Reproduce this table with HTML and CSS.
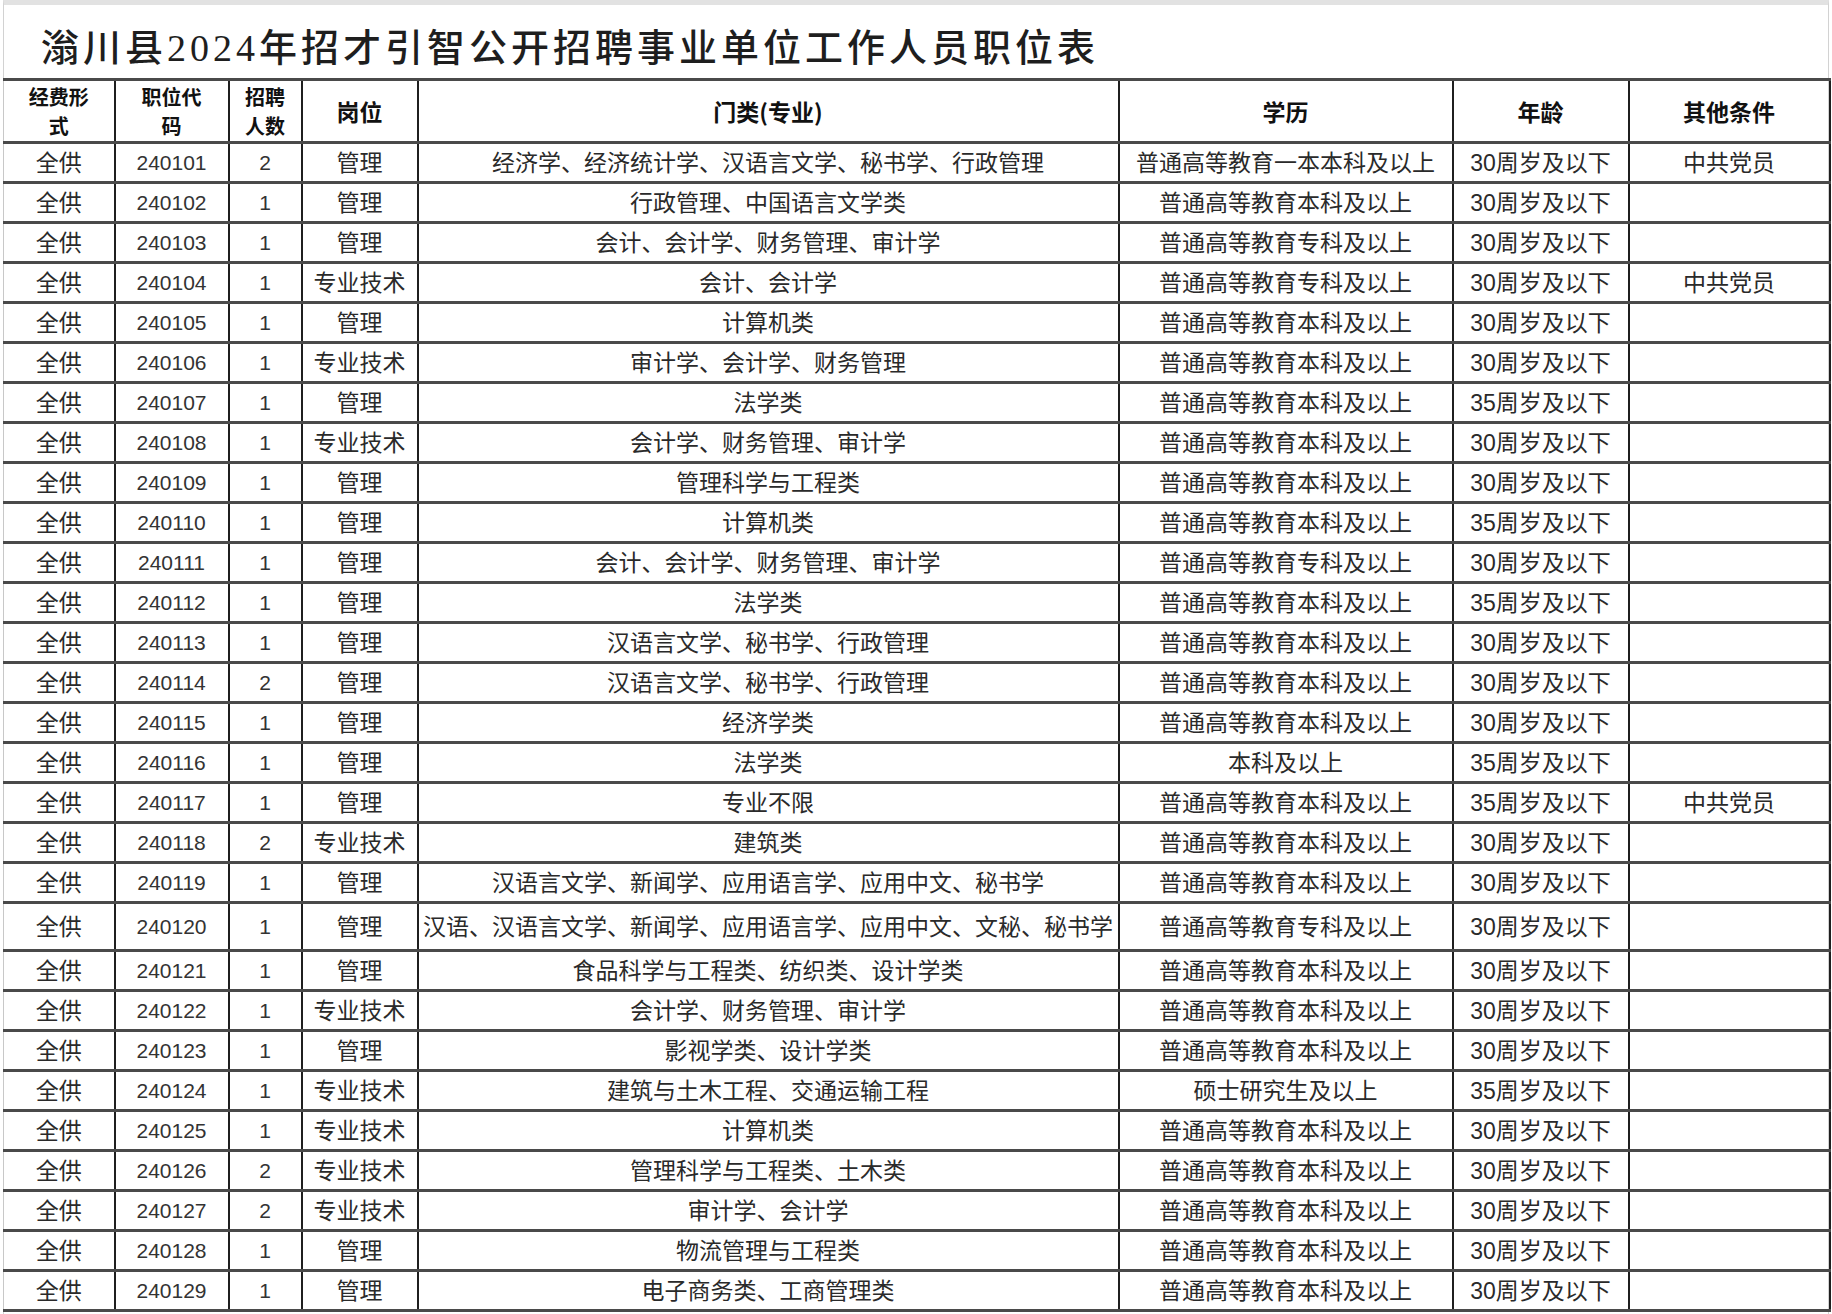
FILE: index.html
```html
<!DOCTYPE html>
<html lang="zh-CN">
<head>
<meta charset="utf-8">
<title>滃川县2024年招才引智公开招聘事业单位工作人员职位表</title>
<link rel="stylesheet" href="styles.css">
</head>
<body>
<div class="frame">
  <h1 class="title">滃川县2024年招才引智公开招聘事业单位工作人员职位表</h1>
  <table class="grid">
    <colgroup>
      <col class="c1"><col class="c2"><col class="c3"><col class="c4"><col class="c5"><col class="c6"><col class="c7"><col class="c8">
    </colgroup>
    <thead>
      <tr class="head">
        <th><span class="hl">经费形</span><span class="hl">式</span></th><th><span class="hl">职位代</span><span class="hl">码</span></th><th><span class="hl">招聘</span><span class="hl">人数</span></th><th>岗位</th><th>门类(专业)</th><th>学历</th><th>年龄</th><th>其他条件</th>
      </tr>
    </thead>
    <tbody>
      <tr><td>全供</td><td class="num">240101</td><td class="num">2</td><td>管理</td><td>经济学、经济统计学、汉语言文学、秘书学、行政管理</td><td>普通高等教育一本本科及以上</td><td>30周岁及以下</td><td>中共党员</td></tr>
      <tr><td>全供</td><td class="num">240102</td><td class="num">1</td><td>管理</td><td>行政管理、中国语言文学类</td><td>普通高等教育本科及以上</td><td>30周岁及以下</td><td></td></tr>
      <tr><td>全供</td><td class="num">240103</td><td class="num">1</td><td>管理</td><td>会计、会计学、财务管理、审计学</td><td>普通高等教育专科及以上</td><td>30周岁及以下</td><td></td></tr>
      <tr><td>全供</td><td class="num">240104</td><td class="num">1</td><td>专业技术</td><td>会计、会计学</td><td>普通高等教育专科及以上</td><td>30周岁及以下</td><td>中共党员</td></tr>
      <tr><td>全供</td><td class="num">240105</td><td class="num">1</td><td>管理</td><td>计算机类</td><td>普通高等教育本科及以上</td><td>30周岁及以下</td><td></td></tr>
      <tr><td>全供</td><td class="num">240106</td><td class="num">1</td><td>专业技术</td><td>审计学、会计学、财务管理</td><td>普通高等教育本科及以上</td><td>30周岁及以下</td><td></td></tr>
      <tr><td>全供</td><td class="num">240107</td><td class="num">1</td><td>管理</td><td>法学类</td><td>普通高等教育本科及以上</td><td>35周岁及以下</td><td></td></tr>
      <tr><td>全供</td><td class="num">240108</td><td class="num">1</td><td>专业技术</td><td>会计学、财务管理、审计学</td><td>普通高等教育本科及以上</td><td>30周岁及以下</td><td></td></tr>
      <tr><td>全供</td><td class="num">240109</td><td class="num">1</td><td>管理</td><td>管理科学与工程类</td><td>普通高等教育本科及以上</td><td>30周岁及以下</td><td></td></tr>
      <tr><td>全供</td><td class="num">240110</td><td class="num">1</td><td>管理</td><td>计算机类</td><td>普通高等教育本科及以上</td><td>35周岁及以下</td><td></td></tr>
      <tr><td>全供</td><td class="num">240111</td><td class="num">1</td><td>管理</td><td>会计、会计学、财务管理、审计学</td><td>普通高等教育专科及以上</td><td>30周岁及以下</td><td></td></tr>
      <tr><td class="marked">全供</td><td class="num">240112</td><td class="num">1</td><td>管理</td><td>法学类</td><td>普通高等教育本科及以上</td><td>35周岁及以下</td><td></td></tr>
      <tr><td>全供</td><td class="num">240113</td><td class="num">1</td><td>管理</td><td>汉语言文学、秘书学、行政管理</td><td>普通高等教育本科及以上</td><td>30周岁及以下</td><td></td></tr>
      <tr><td>全供</td><td class="num">240114</td><td class="num">2</td><td>管理</td><td>汉语言文学、秘书学、行政管理</td><td>普通高等教育本科及以上</td><td>30周岁及以下</td><td></td></tr>
      <tr><td>全供</td><td class="num">240115</td><td class="num">1</td><td>管理</td><td>经济学类</td><td>普通高等教育本科及以上</td><td>30周岁及以下</td><td></td></tr>
      <tr><td>全供</td><td class="num">240116</td><td class="num">1</td><td>管理</td><td>法学类</td><td>本科及以上</td><td>35周岁及以下</td><td></td></tr>
      <tr><td>全供</td><td class="num">240117</td><td class="num">1</td><td>管理</td><td>专业不限</td><td>普通高等教育本科及以上</td><td>35周岁及以下</td><td>中共党员</td></tr>
      <tr><td>全供</td><td class="num">240118</td><td class="num">2</td><td>专业技术</td><td>建筑类</td><td>普通高等教育本科及以上</td><td>30周岁及以下</td><td></td></tr>
      <tr><td>全供</td><td class="num">240119</td><td class="num">1</td><td>管理</td><td>汉语言文学、新闻学、应用语言学、应用中文、秘书学</td><td>普通高等教育本科及以上</td><td>30周岁及以下</td><td></td></tr>
      <tr class="tall"><td>全供</td><td class="num">240120</td><td class="num">1</td><td>管理</td><td>汉语、汉语言文学、新闻学、应用语言学、应用中文、文秘、秘书学</td><td>普通高等教育专科及以上</td><td>30周岁及以下</td><td></td></tr>
      <tr><td>全供</td><td class="num">240121</td><td class="num">1</td><td>管理</td><td>食品科学与工程类、纺织类、设计学类</td><td>普通高等教育本科及以上</td><td>30周岁及以下</td><td></td></tr>
      <tr><td>全供</td><td class="num">240122</td><td class="num">1</td><td>专业技术</td><td>会计学、财务管理、审计学</td><td>普通高等教育本科及以上</td><td>30周岁及以下</td><td></td></tr>
      <tr><td>全供</td><td class="num">240123</td><td class="num">1</td><td>管理</td><td>影视学类、设计学类</td><td>普通高等教育本科及以上</td><td>30周岁及以下</td><td></td></tr>
      <tr><td>全供</td><td class="num">240124</td><td class="num">1</td><td>专业技术</td><td>建筑与土木工程、交通运输工程</td><td>硕士研究生及以上</td><td>35周岁及以下</td><td></td></tr>
      <tr><td>全供</td><td class="num">240125</td><td class="num">1</td><td>专业技术</td><td>计算机类</td><td>普通高等教育本科及以上</td><td>30周岁及以下</td><td></td></tr>
      <tr><td>全供</td><td class="num">240126</td><td class="num">2</td><td>专业技术</td><td>管理科学与工程类、土木类</td><td>普通高等教育本科及以上</td><td>30周岁及以下</td><td></td></tr>
      <tr><td>全供</td><td class="num">240127</td><td class="num">2</td><td>专业技术</td><td>审计学、会计学</td><td>普通高等教育本科及以上</td><td>30周岁及以下</td><td></td></tr>
      <tr><td>全供</td><td class="num">240128</td><td class="num">1</td><td>管理</td><td>物流管理与工程类</td><td>普通高等教育本科及以上</td><td>30周岁及以下</td><td></td></tr>
      <tr><td>全供</td><td class="num">240129</td><td class="num">1</td><td>管理</td><td>电子商务类、工商管理类</td><td>普通高等教育本科及以上</td><td>30周岁及以下</td><td></td></tr>
    </tbody>
  </table>
</div>
</body>
</html>
```

FILE: styles.css
```css
html, body {
  margin: 0;
  padding: 0;
  background: #ffffff;
}

body {
  width: 1832px;
  height: 1314px;
  overflow: hidden;
  font-family: "Liberation Sans", "Noto Sans CJK SC", sans-serif;
  color: #262626;
}

.frame {
  margin-left: 3px;
  width: 1824px;
  border-top: 5px solid #e2e2e2;
  border-left: 1px solid #d2d2d2;
  border-right: 1px solid #d2d2d2;
  height: 1309px;
}

.title {
  margin: 0;
  height: 73px;
  box-sizing: border-box;
  padding: 19px 0 0 37px;
  font-family: "Liberation Serif", "Noto Sans CJK SC", serif;
  font-size: 38px;
  line-height: 48px;
  font-weight: 500;
  letter-spacing: 4px;
  color: #1e1e1e;
  white-space: nowrap;
}

.grid {
  width: 1826px;
  margin-left: -1px;
  border-collapse: collapse;
  table-layout: fixed;
}

.c1 { width: 111px; }
.c2 { width: 114px; }
.c3 { width: 73px; }
.c4 { width: 116px; }
.c5 { width: 701px; }
.c6 { width: 334px; }
.c7 { width: 176px; }
.c8 { width: 201px; }

.grid th,
.grid td {
  border-left: 2px solid #1f1f1f;
  border-right: 2px solid #1f1f1f;
  border-top: 3px solid #4a4a4a;
  border-bottom: 3px solid #4a4a4a;
  padding: 0;
  text-align: center;
  vertical-align: middle;
  white-space: nowrap;
  overflow: hidden;
}

.grid th:first-child,
.grid td:first-child {
  border-left: 1px solid #c8c8c8;
}

.head {
  height: 63px;
}

.head th {
  font-family: "Noto Sans CJK SC", sans-serif;
  font-size: 23px;
  font-weight: 700;
  line-height: 30px;
  color: #111;
}

.head th .hl {
  display: block;
  height: 29px;
  font-size: 20px;
  line-height: 29px;
}

.grid tbody tr {
  height: 40px;
}

.grid tbody tr.tall {
  height: 48px;
}

.grid td {
  font-size: 23px;
  line-height: 30px;
  color: #2a2a2a;
}

.grid td.num {
  font-size: 21px;
  color: #333;
}

.grid td.marked {
  position: relative;
}

.grid td.marked::before {
  content: "";
  position: absolute;
  left: -4px;
  top: 0;
  bottom: 0;
  width: 3px;
  background: #3f9d35;
}
```
